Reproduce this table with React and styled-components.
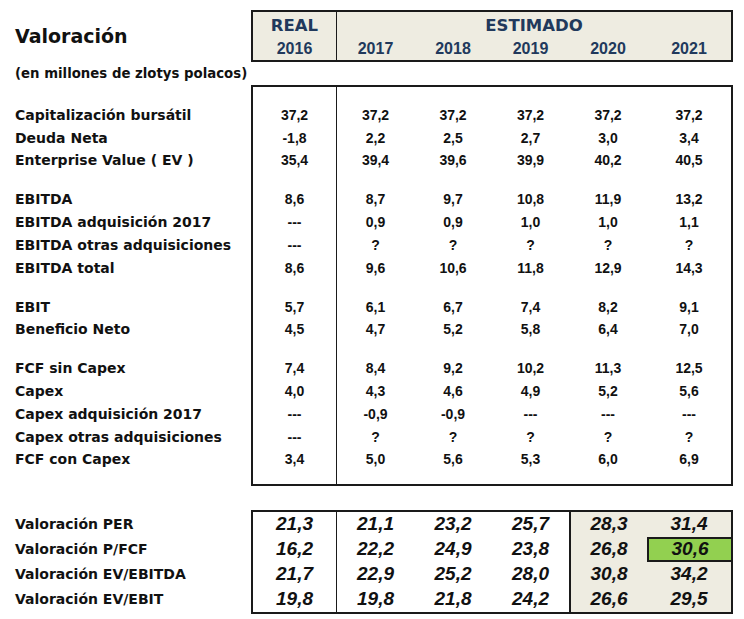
import React from 'react';
import styled, { createGlobalStyle } from 'styled-components';

const GlobalStyle = createGlobalStyle`
  html, body { margin: 0; padding: 0; background: #ffffff; }
  body { font-family: "DejaVu Sans", sans-serif; color: #111111; }
  * { box-sizing: border-box; }
`;

const INK = '#1a1a1a';
const NAVY = '#21395c';
const BEIGE = '#eeece1';
const GREEN = '#92d050';
const FIRST_W = 84;
const EST_W = [77, 78, 77, 78, 84];

const Page = styled.div`
  width: 744px;
  height: 619px;
  padding-top: 10px;
  overflow: hidden;
`;

const Section = styled.div`
  display: flex;
  margin-top: ${(p) => p.$mt || 0}px;
`;

const TitleCell = styled.div`
  width: 251px;
  padding-left: 15px;
  display: flex;
  align-items: center;
  font-size: 19px;
  font-weight: 700;
`;

const Subtitle = styled.div`
  height: 23px;
  padding-left: 15px;
  display: flex;
  align-items: center;
  font-size: 13.3px;
  font-weight: 700;
`;

const HeaderBox = styled.div`
  width: 482px;
  height: 52px;
  border: 2px solid ${INK};
  background: ${BEIGE};
  display: flex;
  color: ${NAVY};
  font-weight: 700;
`;

const HeaderReal = styled.div`
  width: ${FIRST_W}px;
  padding-top: 1px;
  border-right: 1px solid ${INK};
  display: flex;
  flex-direction: column;
`;

const HeaderEst = styled.div`
  flex: 1;
  padding-top: 1px;
  display: flex;
  flex-direction: column;
`;

const HeaderWord = styled.div`
  height: 24px;
  display: flex;
  align-items: center;
  justify-content: center;
  font-size: 16.5px;
  font-family: "DejaVu Sans", sans-serif;
`;

const YearRow = styled.div`
  display: flex;
`;

const Year = styled.div`
  width: ${(p) => p.$w}px;
  height: 23px;
  display: flex;
  align-items: center;
  justify-content: center;
  font-family: "Liberation Sans", Arial, sans-serif;
  font-size: 16px;
`;

const LabelCol = styled.div`
  width: 251px;
  padding-left: 15px;
  padding-top: ${(p) => p.$pt}px;
  display: flex;
  flex-direction: column;
`;

const Label = styled.div`
  height: ${(p) => p.$h}px;
  display: flex;
  align-items: center;
  font-size: 14px;
  font-weight: 700;
  white-space: nowrap;
`;

const Box = styled.div`
  width: 482px;
  border: 2px solid ${INK};
  display: flex;
`;

const Column = styled.div`
  width: ${(p) => p.$w}px;
  padding-top: ${(p) => p.$pt}px;
  padding-bottom: ${(p) => p.$pb}px;
  display: flex;
  flex-direction: column;
  border-right: ${(p) => (p.$divider ? `1px solid ${INK}` : 'none')};
  border-left: ${(p) => (p.$shadeStart ? `2px solid ${INK}` : 'none')};
  background: ${(p) => (p.$shaded ? BEIGE : 'transparent')};
`;

const Value = styled.div`
  height: ${(p) => p.$h}px;
  display: flex;
  align-items: center;
  justify-content: center;
  font-family: "Liberation Sans", Arial, sans-serif;
  font-weight: 700;
  font-size: 14px;
  color: #111111;
`;

const Ratio = styled.div`
  height: ${(p) => p.$h}px;
  display: flex;
  align-items: center;
  justify-content: center;
  font-family: "Liberation Sans", Arial, sans-serif;
  font-weight: 700;
  font-style: italic;
  font-size: 19px;
  color: #111111;
  background: ${(p) => (p.$hl ? GREEN : 'transparent')};
  border: ${(p) => (p.$hl ? `2px solid ${INK}` : 'none')};
  margin-right: ${(p) => (p.$hl ? '-2px' : '0')};
`;

const ROW_H = 22.75;
const GAP_H = 16.25;
const GAP = null;

const mainRows = [
  ['Capitalización bursátil', ['37,2', '37,2', '37,2', '37,2', '37,2', '37,2']],
  ['Deuda Neta', ['-1,8', '2,2', '2,5', '2,7', '3,0', '3,4']],
  ['Enterprise Value ( EV )', ['35,4', '39,4', '39,6', '39,9', '40,2', '40,5']],
  GAP,
  ['EBITDA', ['8,6', '8,7', '9,7', '10,8', '11,9', '13,2']],
  ['EBITDA adquisición 2017', ['---', '0,9', '0,9', '1,0', '1,0', '1,1']],
  ['EBITDA otras adquisiciones', ['---', '?', '?', '?', '?', '?']],
  ['EBITDA total', ['8,6', '9,6', '10,6', '11,8', '12,9', '14,3']],
  GAP,
  ['EBIT', ['5,7', '6,1', '6,7', '7,4', '8,2', '9,1']],
  ['Beneficio Neto', ['4,5', '4,7', '5,2', '5,8', '6,4', '7,0']],
  GAP,
  ['FCF sin Capex', ['7,4', '8,4', '9,2', '10,2', '11,3', '12,5']],
  ['Capex', ['4,0', '4,3', '4,6', '4,9', '5,2', '5,6']],
  ['Capex adquisición 2017', ['---', '-0,9', '-0,9', '---', '---', '---']],
  ['Capex otras adquisiciones', ['---', '?', '?', '?', '?', '?']],
  ['FCF con Capex', ['3,4', '5,0', '5,6', '5,3', '6,0', '6,9']],
];

const ratioRows = [
  ['Valoración PER', ['21,3', '21,1', '23,2', '25,7', '28,3', '31,4']],
  ['Valoración P/FCF', ['16,2', '22,2', '24,9', '23,8', '26,8', '30,6']],
  ['Valoración EV/EBITDA', ['21,7', '22,9', '25,2', '28,0', '30,8', '34,2']],
  ['Valoración EV/EBIT', ['19,8', '19,8', '21,8', '24,2', '26,6', '29,5']],
];

const COL_W = [FIRST_W, ...EST_W];
const years = ['2017', '2018', '2019', '2020', '2021'];

const MAIN_PT = 16.6;
const MAIN_PB = 13.1;
const RATIO_H = 25;

export default function App() {
  return (
    <>
      <GlobalStyle />
      <Page>
        <Section>
          <TitleCell>Valoración</TitleCell>
          <HeaderBox>
            <HeaderReal>
              <HeaderWord>REAL</HeaderWord>
              <Year $w={FIRST_W - 1}>2016</Year>
            </HeaderReal>
            <HeaderEst>
              <HeaderWord>ESTIMADO</HeaderWord>
              <YearRow>
                {years.map((y, i) => (
                  <Year key={y} $w={EST_W[i]}>{y}</Year>
                ))}
              </YearRow>
            </HeaderEst>
          </HeaderBox>
        </Section>

        <Subtitle>(en millones de zlotys polacos)</Subtitle>

        <Section>
          <LabelCol $pt={2 + MAIN_PT}>
            {mainRows.map((r, i) =>
              r === GAP ? (
                <Label key={i} $h={GAP_H} />
              ) : (
                <Label key={i} $h={ROW_H}>{r[0]}</Label>
              )
            )}
          </LabelCol>
          <Box>
            {COL_W.map((w, c) => (
              <Column key={c} $w={w} $pt={MAIN_PT} $pb={MAIN_PB} $divider={c === 0}>
                {mainRows.map((r, i) =>
                  r === GAP ? (
                    <Value key={i} $h={GAP_H} />
                  ) : (
                    <Value key={i} $h={ROW_H}>{r[1][c]}</Value>
                  )
                )}
              </Column>
            ))}
          </Box>
        </Section>

        <Section $mt={24}>
          <LabelCol $pt={2}>
            {ratioRows.map((r) => (
              <Label key={r[0]} $h={RATIO_H}>{r[0]}</Label>
            ))}
          </LabelCol>
          <Box>
            {COL_W.map((w, c) => (
              <Column
                key={c}
                $w={w}
                $pt={0}
                $pb={0}
                $divider={c === 0}
                $shaded={c >= 4}
                $shadeStart={c === 4}
              >
                {ratioRows.map((r, i) => (
                  <Ratio key={i} $h={RATIO_H} $hl={c === 5 && i === 1}>
                    {r[1][c]}
                  </Ratio>
                ))}
              </Column>
            ))}
          </Box>
        </Section>
      </Page>
    </>
  );
}
